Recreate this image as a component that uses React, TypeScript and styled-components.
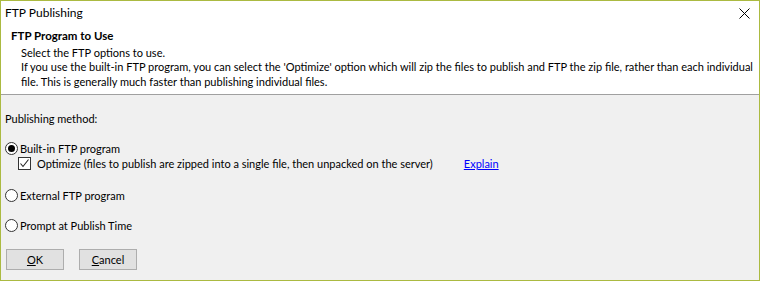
import React from "react";
import styled, { createGlobalStyle } from "styled-components";

const Global = createGlobalStyle`
  html, body { margin: 0; padding: 0; background: #ffffff; }
  body { font-family: "Lato", "Noto Sans", sans-serif; font-size: 11px; color: #000; }
  * { box-sizing: border-box; }
`;

const Window = styled.div`
  width: 760px;
  height: 281px;
  border: 1px solid #abba41;
  display: flex;
  flex-direction: column;
  background: #f0f0f0;
`;

const TitleBar = styled.div`
  height: 24px;
  background: #fff;
  display: flex;
  align-items: center;
  justify-content: space-between;
  padding: 0 0 0 4px;
`;

const TitleText = styled.span`
  font-size: 12px;
  line-height: 16px;
`;

const CloseButton = styled.button`
  width: 32px;
  height: 24px;
  border: none;
  background: transparent;
  display: flex;
  align-items: center;
  justify-content: center;
  padding: 0 0 0 2px;
`;

const Header = styled.div`
  background: #fff;
  border-bottom: 1px solid #a0a0a0;
  padding: 3px 10px 0 10px;
  height: 70px;
`;

const HeaderTitle = styled.div`
  font-weight: bold;
  font-size: 11.5px;
  line-height: 16px;
`;

const HeaderText = styled.div`
  padding-left: 10px;
  line-height: 14.5px;
  margin-top: 1.5px;
  white-space: nowrap;
`;

const Body = styled.div`
  flex: 1;
  padding: 16px 0 0 4px;
  display: flex;
  flex-direction: column;
`;

const SectionLabel = styled.div`
  line-height: 16px;
  margin-bottom: 13.5px;
`;

const OptionRow = styled.label<{ $indent?: number; $gap?: number }>`
  display: flex;
  align-items: center;
  height: 15px;
  padding-left: ${(p) => p.$indent ?? 0}px;
  margin-bottom: ${(p) => p.$gap ?? 0}px;
`;

const RadioCircle = styled.span<{ $checked?: boolean }>`
  width: 13px;
  height: 13px;
  border-radius: 50%;
  border: 1px solid #333;
  background: #fff;
  display: inline-flex;
  align-items: center;
  justify-content: center;
  margin-right: 2px;
  &::after {
    content: "";
    width: 7px;
    height: 7px;
    border-radius: 50%;
    background: ${(p) => (p.$checked ? "#000" : "transparent")};
  }
`;

const CheckBox = styled.span`
  width: 13px;
  height: 13px;
  border: 1px solid #333;
  background: #fff;
  display: inline-flex;
  align-items: center;
  justify-content: center;
  margin-right: 6px;
`;

const OptionText = styled.span`
  line-height: 15px;
  white-space: nowrap;
`;

const Link = styled.a`
  color: #0000ff;
  text-decoration: underline;
  margin-left: 31px;
  cursor: pointer;
`;

const ButtonRow = styled.div`
  display: flex;
  gap: 15px;
  padding-left: 1px;
  margin-top: 16.5px;
`;

const Button = styled.button`
  width: 58px;
  height: 21px;
  background: #e1e1e1;
  border: 1px solid #adadad;
  font-family: inherit;
  font-size: 11px;
  color: #000;
  padding: 0;
  line-height: 17px;
  u { text-decoration: underline; }
`;

export default function App() {
  return (
    <>
      <Global />
      <Window>
        <TitleBar>
          <TitleText>FTP Publishing</TitleText>
          <CloseButton aria-label="Close">
            <svg width="11" height="11" viewBox="0 0 11 11">
              <path d="M0.5 0.5 L10.5 10.5 M10.5 0.5 L0.5 10.5" stroke="#000" strokeWidth="1" />
            </svg>
          </CloseButton>
        </TitleBar>
        <Header>
          <HeaderTitle>FTP Program to Use</HeaderTitle>
          <HeaderText>
            Select the FTP options to use.
            <br />
            If you use the built-in FTP program, you can select the 'Optimize' option which will zip the files to publish and FTP the zip file, rather than each individual
            <br />
            file. This is generally much faster than publishing individual files.
          </HeaderText>
        </Header>
        <Body>
          <SectionLabel>Publishing method:</SectionLabel>
          <OptionRow>
            <RadioCircle $checked />
            <OptionText>Built-in FTP program</OptionText>
          </OptionRow>
          <OptionRow $indent={13} $gap={17}>
            <CheckBox>
              <svg width="11" height="11" viewBox="0 0 11 11">
                <path d="M1.5 5.5 L4 8.5 L9.5 1.5" stroke="#222" strokeWidth="1.1" fill="none" />
              </svg>
            </CheckBox>
            <OptionText>Optimize (files to publish are zipped into a single file, then unpacked on the server)</OptionText>
            <Link>Explain</Link>
          </OptionRow>
          <OptionRow $gap={15}>
            <RadioCircle />
            <OptionText>External FTP program</OptionText>
          </OptionRow>
          <OptionRow>
            <RadioCircle />
            <OptionText>Prompt at Publish Time</OptionText>
          </OptionRow>
          <ButtonRow>
            <Button>
              <u>O</u>K
            </Button>
            <Button>
              <u>C</u>ancel
            </Button>
          </ButtonRow>
        </Body>
      </Window>
    </>
  );
}
